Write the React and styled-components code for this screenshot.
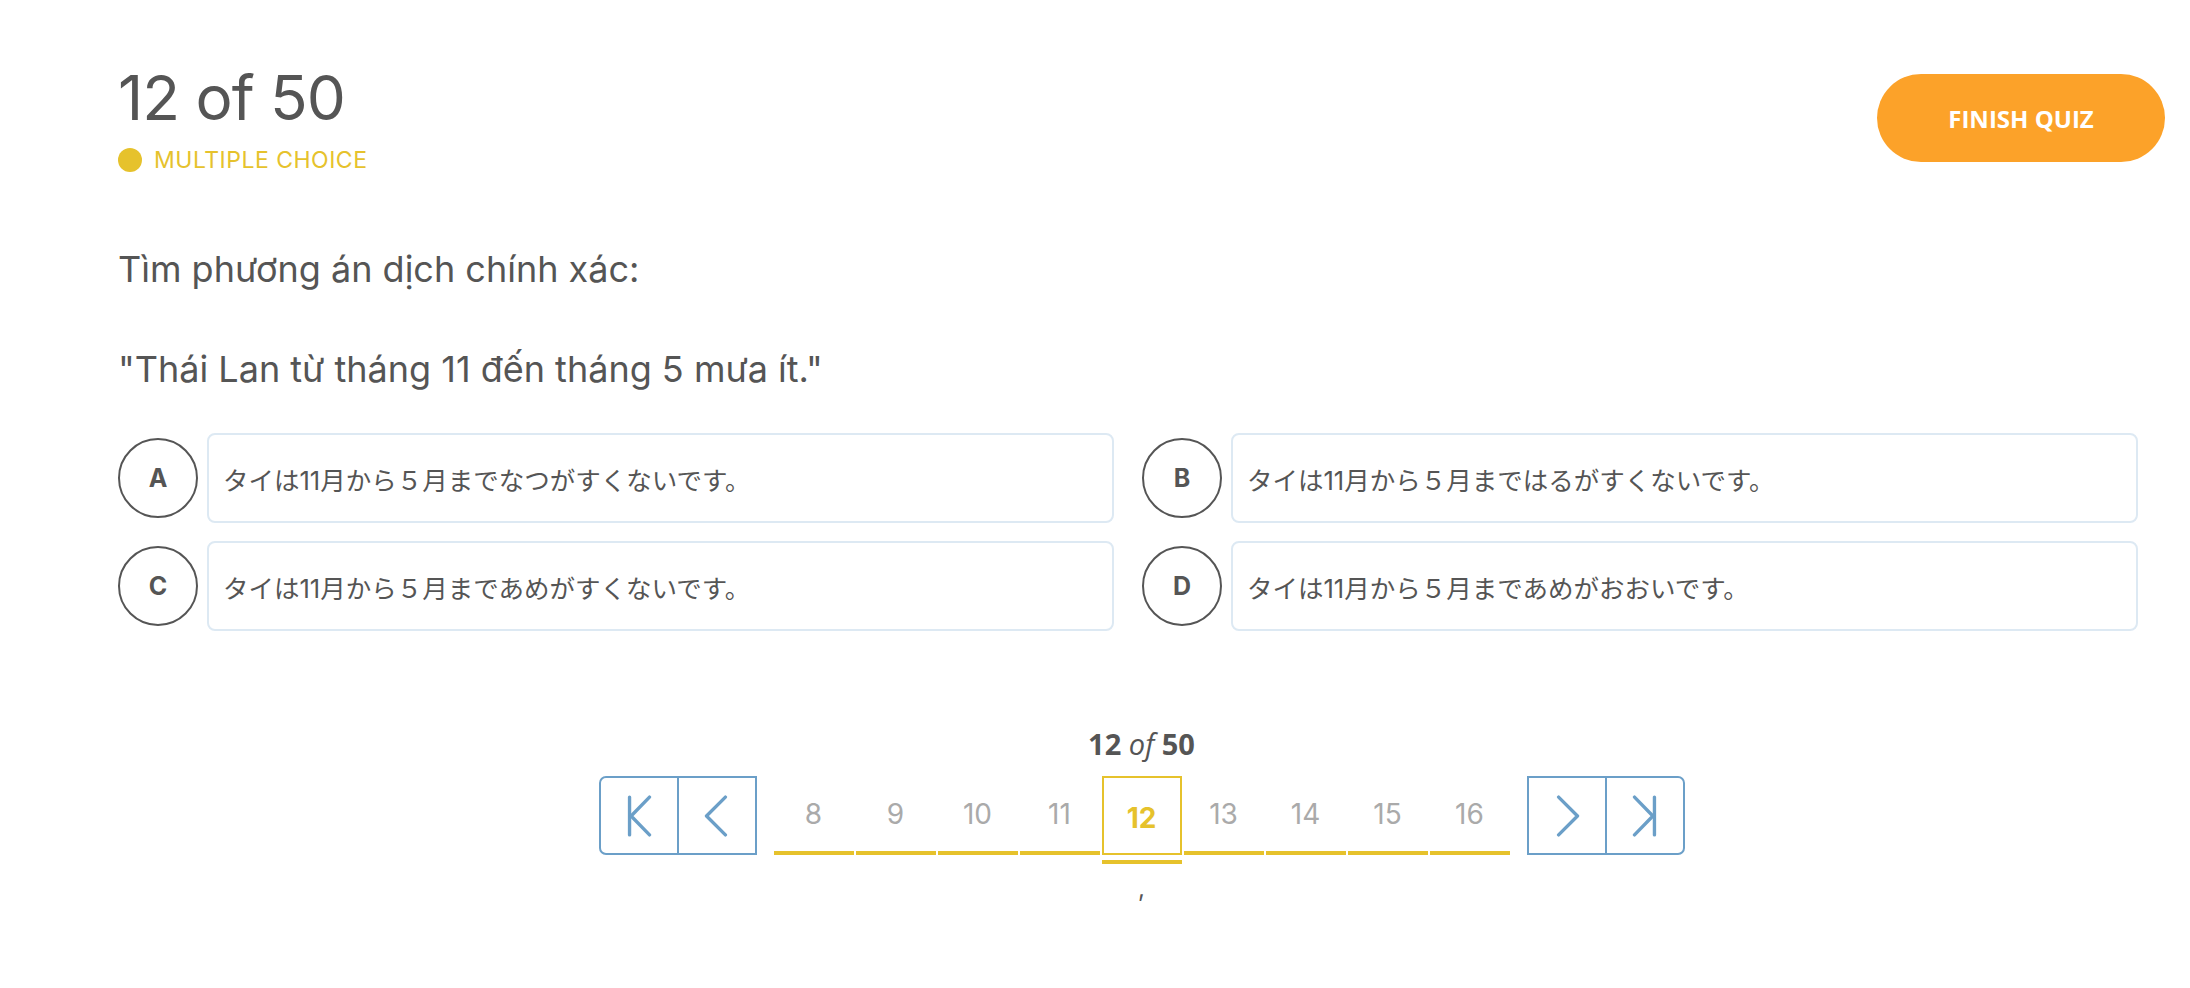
import React from "react";
import styled, { createGlobalStyle } from "styled-components";

const GlobalStyle = createGlobalStyle`
  html, body {
    margin: 0;
    padding: 0;
    background: #ffffff;
  }
  body {
    font-family: "Inter", "Noto Sans", sans-serif;
    color: #555555;
  }
  * { box-sizing: border-box; }
`;

const Page = styled.div`
  padding: 66px 25px 0 118px;
  min-height: 988px;
`;

const Header = styled.header`
  display: flex;
  justify-content: space-between;
  align-items: flex-start;
`;

const TitleBlock = styled.div`
  display: flex;
  flex-direction: column;
`;

const Title = styled.h1`
  margin: 0;
  font-family: "Inter", sans-serif;
  font-weight: 400;
  font-size: 62px;
  line-height: 64px;
  letter-spacing: -1px;
  color: #555555;
`;

const TypeTag = styled.div`
  margin-top: 15px;
  display: flex;
  align-items: center;
  gap: 12px;
  font-family: "Inter", sans-serif;
  font-size: 23px;
  line-height: 30px;
  letter-spacing: 0.5px;
  color: #e6c22c;
  text-transform: uppercase;
`;

const Dot = styled.span`
  width: 24px;
  height: 24px;
  border-radius: 50%;
  background: #e6c22c;
  flex: none;
`;

const FinishButton = styled.button`
  margin-top: 8px;
  width: 288px;
  height: 88px;
  border: none;
  border-radius: 44px;
  background: #fca229;
  color: #ffffff;
  font-family: "Open Sans", sans-serif;
  font-weight: 700;
  font-size: 24px;
  cursor: pointer;
`;

const Question = styled.p`
  margin: ${(p) => p.$top}px 0 0;
  font-family: "Inter", sans-serif;
  font-size: 36px;
  line-height: 44px;
  color: #555555;
`;

const OptionsGrid = styled.div`
  margin-top: 42px;
  width: 2020px;
  display: grid;
  grid-template-columns: 1fr 1fr;
  column-gap: 28px;
  row-gap: 18px;
`;

const Option = styled.div`
  display: flex;
  align-items: center;
  gap: 9px;
`;

const Letter = styled.div`
  flex: none;
  width: 80px;
  height: 80px;
  border-radius: 50%;
  border: 2px solid #555555;
  display: flex;
  align-items: center;
  justify-content: center;
  font-family: "Inter", sans-serif;
  font-weight: 700;
  font-size: 25px;
  color: #555555;
`;

const AnswerBox = styled.div`
  flex: 1;
  height: 90px;
  border: 2px solid #dde9f3;
  border-radius: 8px;
  display: flex;
  align-items: center;
  padding: 0 14px;
  font-family: "Inter", "Noto Sans CJK JP", sans-serif;
  font-size: 25.5px;
  color: #555555;
`;

const Pager = styled.nav`
  margin-top: 94px;
  display: flex;
  flex-direction: column;
  align-items: center;
`;

const PagerLabel = styled.div`
  font-family: "Open Sans", sans-serif;
  font-weight: 700;
  font-size: 29px;
  line-height: 38px;
  color: #555555;
  margin-bottom: 13px;

  em {
    font-weight: 400;
    font-style: italic;
  }
`;

const PagerRow = styled.div`
  display: flex;
  align-items: flex-start;
  gap: 17px;
`;

const NavGroup = styled.div`
  display: flex;
`;

const NavButton = styled.button`
  width: 80px;
  height: 79px;
  padding: 0;
  background: #ffffff;
  border: 2px solid #6b9fc8;
  display: flex;
  align-items: center;
  justify-content: center;
  cursor: pointer;
  border-radius: ${(p) =>
    p.$side === "left" ? "7px 0 0 7px" : p.$side === "right" ? "0 7px 7px 0" : "0"};
  & + & {
    margin-left: -2px;
  }
`;

const Pages = styled.div`
  display: flex;
  gap: 2px;
`;

const PageItem = styled.div`
  position: relative;
  width: 80px;
  height: 79px;
  display: flex;
  align-items: center;
  justify-content: center;
  font-family: "Inter", sans-serif;
  font-size: 28px;
  color: ${(p) => (p.$current ? "#e6c22c" : "#aaaaaa")};
  font-weight: ${(p) => (p.$current ? 700 : 400)};
  border: ${(p) => (p.$current ? "2px solid #e6c22c" : "none")};
  border-bottom: 4px solid #e6c22c;
  border-bottom-width: ${(p) => (p.$current ? "2px" : "4px")};
  padding-top: ${(p) => (p.$current ? "4px" : "0")};

  ${(p) =>
    p.$current &&
    `
    &::after {
      content: "";
      position: absolute;
      left: -2px;
      right: -2px;
      bottom: -11px;
      height: 4px;
      background: #e6c22c;
    }
  `}
`;

const Comma = styled.div`
  margin-top: 19px;
  font-family: "Inter", sans-serif;
  font-size: 24px;
  line-height: 30px;
  color: #555555;
`;

const Icon = ({ type }) => {
  const common = {
    width: 42,
    height: 42,
    viewBox: "0 0 40 40",
    fill: "none",
    stroke: "#6b9fc8",
    strokeWidth: 3.2,
    strokeLinecap: "round",
    strokeLinejoin: "round",
  };
  if (type === "first")
    return (
      <svg {...common}>
        <path d="M11 2 V38" />
        <path d="M30 2 L12.5 20 L30 38" />
      </svg>
    );
  if (type === "prev")
    return (
      <svg {...common}>
        <path d="M28 2 L10 20 L28 38" />
      </svg>
    );
  if (type === "next")
    return (
      <svg {...common}>
        <path d="M12 2 L30 20 L12 38" />
      </svg>
    );
  return (
    <svg {...common}>
      <path d="M10 2 L27.5 20 L10 38" />
      <path d="M29 2 V38" />
    </svg>
  );
};

const options = [
  { key: "A", text: "タイは11月から５月までなつがすくないです。" },
  { key: "B", text: "タイは11月から５月まではるがすくないです。" },
  { key: "C", text: "タイは11月から５月まであめがすくないです。" },
  { key: "D", text: "タイは11月から５月まであめがおおいです。" },
];

const pages = [8, 9, 10, 11, 12, 13, 14, 15, 16];

export default function App() {
  return (
    <>
      <GlobalStyle />
      <Page>
        <Header>
          <TitleBlock>
            <Title>12 of 50</Title>
            <TypeTag>
              <Dot />
              Multiple choice
            </TypeTag>
          </TitleBlock>
          <FinishButton>FINISH QUIZ</FinishButton>
        </Header>

        <Question $top={72}>Tìm phương án dịch chính xác:</Question>
        <Question $top={56}>"Thái Lan từ tháng 11 đến tháng 5 mưa ít."</Question>

        <OptionsGrid>
          {options.map((o) => (
            <Option key={o.key}>
              <Letter>{o.key}</Letter>
              <AnswerBox>{o.text}</AnswerBox>
            </Option>
          ))}
        </OptionsGrid>

        <Pager>
          <PagerLabel>
            12 <em>of</em> 50
          </PagerLabel>
          <PagerRow>
            <NavGroup>
              <NavButton $side="left" aria-label="First">
                <Icon type="first" />
              </NavButton>
              <NavButton aria-label="Previous">
                <Icon type="prev" />
              </NavButton>
            </NavGroup>
            <Pages>
              {pages.map((n) => (
                <PageItem key={n} $current={n === 12}>
                  {n}
                </PageItem>
              ))}
            </Pages>
            <NavGroup>
              <NavButton aria-label="Next">
                <Icon type="next" />
              </NavButton>
              <NavButton $side="right" aria-label="Last">
                <Icon type="last" />
              </NavButton>
            </NavGroup>
          </PagerRow>
          <Comma>,</Comma>
        </Pager>
      </Page>
    </>
  );
}
